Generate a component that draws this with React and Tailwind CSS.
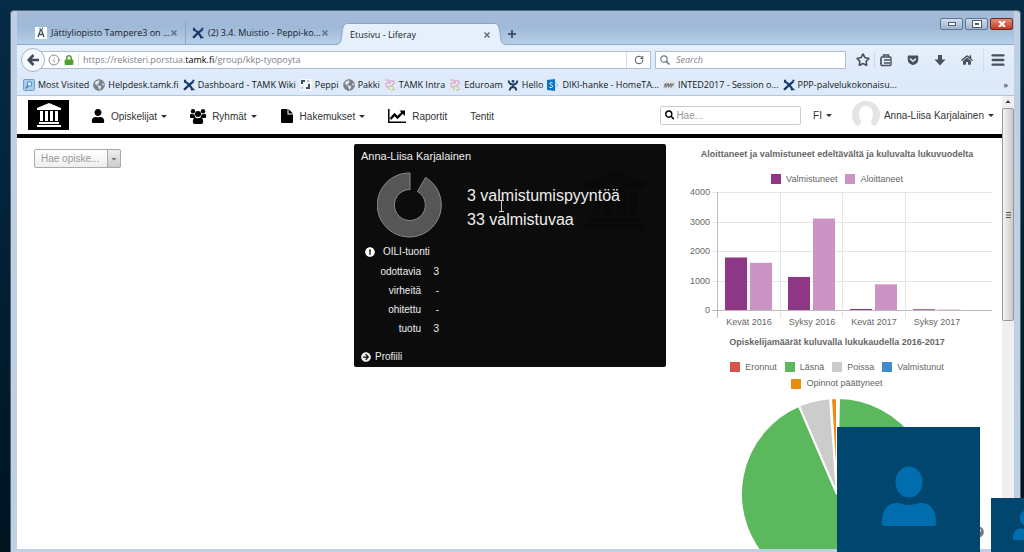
import React from 'react';
import { FaUser, FaSearch, FaCaretDown, FaLock, FaExclamationCircle, FaArrowCircleRight, FaHome, FaGlobeAmericas, FaQuestionCircle, FaGetPocket } from 'react-icons/fa';
import { Info, Menu, RotateCw, Star } from 'lucide-react';

const valilehdet = [
    { nimi: 'Jättiyliopisto Tampere3 on ...', ikoni: 'aamu' },
    { nimi: '(2) 3.4. Muistio - Peppi-ko...', ikoni: 'wiki' },
];

const kirjanmerkit = [
    { nimi: 'Most Visited', ikoni: 'most' },
    { nimi: 'Helpdesk.tamk.fi', ikoni: 'globe' },
    { nimi: 'Dashboard - TAMK Wiki', ikoni: 'wiki' },
    { nimi: 'Peppi', ikoni: 'peppi' },
    { nimi: 'Pakki', ikoni: 'globe' },
    { nimi: 'TAMK Intra', ikoni: 'intra' },
    { nimi: 'Eduroam', ikoni: 'intra' },
    { nimi: 'Hello', ikoni: 'hello' },
    { nimi: 'DIKI-hanke - HomeTA...', ikoni: 'share' },
    { nimi: 'INTED2017 - Session o...', ikoni: 'inted' },
    { nimi: 'PPP-palvelukokonaisu...', ikoni: 'wiki' },
];

const tuonti = [
    { nimi: 'odottavia', arvo: '3' },
    { nimi: 'virheitä', arvo: '-' },
    { nimi: 'ohitettu', arvo: '-' },
    { nimi: 'tuotu', arvo: '3' },
];

const lukukaudet = [
    { nimi: 'Kevät 2016', valmistuneet: 1780, aloittaneet: 1600 },
    { nimi: 'Syksy 2016', valmistuneet: 1120, aloittaneet: 3100 },
    { nimi: 'Kevät 2017', valmistuneet: 35, aloittaneet: 870 },
    { nimi: 'Syksy 2017', valmistuneet: 25, aloittaneet: 12 },
];

function Ikoni({ tyyppi }) {
    if (tyyppi === 'globe') return <FaGlobeAmericas className="size-3 shrink-0 text-[#7b8187]" />;
    return (
        <svg viewBox="0 0 12 12" className="size-3 shrink-0" aria-hidden="true">
            {tyyppi === 'wiki' && (
                <g fill="none" stroke="#173a6b" strokeWidth="2.2">
                    <path d="M1 2.5C4 3 8 7 9.500 11" />
                    <path d="M10.500 2.500C8 4 4 8 1 10.800" />
                    <path d="M1 1.500h2M9.500 1.500h2M8 10.500h3.500" strokeWidth="1.500" />
                </g>
            )}
            {tyyppi === 'aamu' && (
                <>
                    <rect width="12" height="12" fill="#fff" />
                    <path d="M3 10 5.500 3h1L9 10M4 7.500h4M4.500 1.500h1M7 1.500h1" fill="none" stroke="#38536c" strokeWidth="1.300" />
                </>
            )}
            {tyyppi === 'most' && (
                <>
                    <rect x=".5" y=".5" width="11" height="11" rx="1" fill="#a9cdea" stroke="#6fa0cc" />
                    <circle cx="6.500" cy="5" r="2.300" fill="#e4f2fc" stroke="#3f7db5" />
                    <path d="M5 7 2.500 9.500" stroke="#3f7db5" strokeWidth="1.500" />
                </>
            )}
            {tyyppi === 'peppi' && (
                <>
                    <rect width="12" height="12" fill="#f5f7fa" />
                    <path d="M1 5V1h4v2H3v2zM6 8h2V5h2v5H6z" fill="#35516b" />
                    <path d="M1 8h2v2H1zM7 1h2v2H7z" fill="#b8c4cf" />
                </>
            )}
            {tyyppi === 'intra' && (
                <g fill="none" strokeWidth="1">
                    <path d="M1 1h4v3H2M2 4v4h3" stroke="#e0a0ae" />
                    <path d="M6 5V2h4v3l-2 1" stroke="#e58cd0" />
                    <path d="M5 11V7h3l2 2v2H7M8 6v2" stroke="#cbbf6a" />
                </g>
            )}
            {tyyppi === 'hello' && (
                <g fill="none" stroke="#1d3d63" strokeWidth="1.800">
                    <circle cx="6" cy="2.300" r="1.400" fill="#1d3d63" stroke="none" />
                    <path d="M1.500 1.500C2 5 4.500 5.500 6 5.500S10 5 10.500 1.500M6 5v3M2.500 11.500C3 8.500 5 8 6 8s3 .5 3.500 3.500" />
                </g>
            )}
            {tyyppi === 'share' && (
                <>
                    <path d="M7 2.500 11 6 7 9.500z" fill="#d8ebf8" stroke="#7fb6dd" strokeWidth=".8" />
                    <path d="M0 1 8 0v12L0 11z" fill="#0b72c4" />
                    <path d="M5.500 4C4 3 2.500 3.500 3 5c.5 1 2.500.8 2.500 2.200S3.500 9 2.300 8" fill="none" stroke="#fff" />
                </>
            )}
            {tyyppi === 'inted' && (
                <>
                    <rect y="2" width="12" height="8" fill="#e3e4e6" />
                    <path d="M1 8.500 3 4v4.500L5.500 4v4.500L8 4v4.500L10.500 4M1 6h10" fill="none" stroke="#77797c" />
                </>
            )}
        </svg>
    );
}

function Pylvastalo({ className }) {
    return (
        <svg viewBox="0 0 26 24" className={className} fill="currentColor" aria-hidden="true">
            <path d="M13 0 25 5v2H1V5zM4 8h3v10H4zM9 8h3v10H9zM14 8h3v10h-3zM19 8h3v10h-3zM3 19h20v2H3zM1 22h24v2H1z" />
        </svg>
    );
}

function Ryhma() {
    return (
        <svg viewBox="0 0 16 15" className="h-[15px] w-4 text-black" fill="currentColor" aria-hidden="true">
            <circle cx="3" cy="2.300" r="2.200" />
            <circle cx="13" cy="2.300" r="2.200" />
            <circle cx="8" cy="5" r="3" />
            <path d="M0 8.500V6.700C0 5.500.5 4.800 1.500 4.800q1.500.9 3 .2C4.500 6.600 5 7.500 5.800 8.300L4 9H1zM16 8.500V6.700C16 5.500 15.500 4.800 14.500 4.800q-1.500.9-3 .2c0 1.600-.5 2.500-1.300 3.300L12 9h3z" />
            <path d="M2.800 13C2.800 10.500 3.600 8.500 5.300 8.500q2.700 1.500 5.400 0c1.700 0 2.500 2 2.500 4.500q0 2-2 2H4.800q-2 0-2-2z" />
        </svg>
    );
}

function Nuoli() {
    return <svg viewBox="0 0 6 3" className="h-[3px] w-1.5" aria-hidden="true"><path d="M0 0h6L3 3z" fill="#333" /></svg>;
}

function Sulje({ nimi }) {
    return (
        <button aria-label={nimi} className="shrink-0">
            <svg viewBox="0 0 6 6" className="size-1.5" fill="none" stroke="#62707f" strokeWidth="1.5"><path d="m.5.5 5 5m0-5-5 5" /></svg>
        </button>
    );
}

function Otsikkorivi() {
    return (
        <div className="flex h-[34px] items-end border-b border-[#8fa9c6] bg-linear-to-b from-[#a3bbd8] via-[#9fb9d8] to-[#b6cfea] text-[#14202c]">
            {valilehdet.map((lehti, i) => (
                <div key={lehti.nimi} className={`flex h-[22px] items-center gap-1 pr-2 ${i === 0 ? 'ml-[18px] w-[151px] border-r border-[#8ba5c2]' : 'w-[150px] pl-1.5'}`}>
                    <Ikoni tyyppi={lehti.ikoni} />
                    <span className="min-w-0 grow whitespace-nowrap">{lehti.nimi}</span>
                    <Sulje nimi="Sulje välilehti" />
                </div>
            ))}
            <div className="-mb-px flex h-[22px]">
                <svg viewBox="0 0 12 22" className="h-[22px] w-3"><path d="M0 22C6 21 5 17 6 10 7 3 8 .5 12 .5V22z" fill="#e6f0fb" /><path d="M0 21.500C6 20 5 17 6 10 7 3 8 .5 12 .5" fill="none" stroke="#8ba5c2" /></svg>
                <div className="flex w-[146px] items-center justify-between border-t border-[#8ba5c2] bg-[#e6f0fb] pr-1 pl-0.5">
                    <span>Etusivu - Liferay</span>
                    <Sulje nimi="Sulje välilehti" />
                </div>
                <svg viewBox="0 0 12 22" className="h-[22px] w-3"><path d="M12 22C6 21 7 17 6 10 5 3 4 .5 0 .5V22z" fill="#e6f0fb" /><path d="M12 21.500C6 20 7 17 6 10 5 3 4 .5 0 .5" fill="none" stroke="#8ba5c2" /></svg>
            </div>
            <button aria-label="Uusi välilehti" className="mb-1.5 ml-0.5">
                <svg viewBox="0 0 8 8" className="size-2" stroke="#2f3d4b" strokeWidth="1.500"><path d="M4 0v8M0 4h8" /></svg>
            </button>
            <div className="mr-px mb-3.5 ml-auto flex gap-0.5">
                <button aria-label="Pienennä" className="flex h-3 w-[23px] items-center justify-center rounded-xs border border-[#5f7692] bg-linear-to-b from-[#cfdceb] to-[#9fb5d0]"><span className="h-1 w-2 border border-[#4d5c6e] bg-white" /></button>
                <button aria-label="Suurenna" className="flex h-3 w-[23px] items-center justify-center rounded-xs border border-[#5f7692] bg-linear-to-b from-[#cfdceb] to-[#9fb5d0]"><span className="h-1.5 w-2 border-2 border-white bg-[#4d5c6e] outline outline-[#4d5c6e]" /></button>
                <button aria-label="Sulje ikkuna" className="flex h-3 w-[23px] items-center justify-center rounded-xs border border-[#6d2a20] bg-linear-to-b from-[#e08d78] to-[#c23a1e]">
                    <svg viewBox="0 0 8 6" className="h-1.5 w-2" stroke="#fff" strokeWidth="2"><path d="m1 0 6 6m0-6L1 6" /></svg>
                </button>
            </div>
        </div>
    );
}

function Osoiterivi() {
    return (
        <div className="flex h-[30px] items-center bg-linear-to-b from-[#e6f0fb] to-[#deeafa] pr-2 pl-1 text-[#46515d]">
            <button aria-label="Takaisin" className="z-10 flex size-6 shrink-0 items-center justify-center rounded-full border border-[#a3b2c4] bg-[#f5f9fd]">
                <svg viewBox="0 0 12 12" className="size-3" fill="none" stroke="#414b56" strokeWidth="2.600"><path d="M6.500 1 1.800 6l4.700 5M2 6h10" /></svg>
            </button>
            <div className="-ml-1 flex h-[18px] grow items-center border border-[#aebfd2] bg-white pl-1.5">
                <Info className="size-3 text-[#7a7f85]" strokeWidth={1.8} />
                <FaLock className="ml-1 size-2.5 text-[#4fa02c]" />
                <div className="ml-1 h-3 border-l border-[#d9dee4]" />
                <div className="ml-1 grow text-[#7d848b]">https://rekisteri.porstua.<span className="text-black">tamk.fi</span>/group/kkp-tyopoyta</div>
                <button aria-label="Lataa uudelleen" className="flex h-full w-6 items-center justify-center border-l border-[#d3dce6]"><RotateCw className="size-2.5" strokeWidth={2.4} /></button>
            </div>
            <label className="ml-1 flex h-[18px] w-[191px] items-center gap-1.5 border border-[#aebfd2] bg-white pl-1">
                <svg viewBox="0 0 10 10" className="size-2.5" fill="none" stroke="#7a838c"><circle cx="4" cy="4" r="3.200" strokeWidth="1.300" /><path d="m6.300 6.300 3.200 3.200" strokeWidth="1.800" /></svg>
                <input aria-label="Search" placeholder="Search" className="min-w-0 grow italic outline-none placeholder:text-[#7d848b]" />
            </label>
            <button aria-label="Kirjanmerkki" className="ml-2.5"><Star className="size-3.5" strokeWidth={2.8} /></button>
            <div className="ml-1 h-4 border-l border-[#ccd9e8]" />
            <button aria-label="Kirjanmerkit" className="ml-1">
                <svg viewBox="0 0 14 14" className="size-3.5" fill="none" stroke="currentColor" strokeWidth="1.400"><rect x="2" y="4" width="10" height="8.500" rx="1" /><path d="M4.500 4V2h5v2M1 7h2M1 10h2M5 7h6M5 10h6" /></svg>
            </button>
            <button aria-label="Pocket" className="ml-3.5"><FaGetPocket className="size-3" /></button>
            <button aria-label="Lataukset" className="ml-3.5">
                <svg viewBox="0 0 14 14" className="size-3.5" fill="currentColor"><path d="M5 2h4v4.500h3.500L7 12.500 1.500 6.500H5z" /></svg>
            </button>
            <button aria-label="Koti" className="ml-3.5"><FaHome className="size-3" /></button>
            <div className="ml-2.5 h-6 border-l border-[#d3dfec]" />
            <button aria-label="Valikko" className="ml-1.5"><Menu className="size-4" strokeWidth={3.5} /></button>
        </div>
    );
}

function Kirjanmerkkirivi() {
    return (
        <div className="flex h-[21px] items-center gap-1 border-b border-[#b4c6da] bg-[#deeafa] pr-1.5 pl-1.5 text-[#101820]">
            {kirjanmerkit.map(merkki => (
                <a key={merkki.nimi} href="#" className="flex items-center gap-[3px] whitespace-nowrap"><Ikoni tyyppi={merkki.ikoni} />{merkki.nimi}</a>
            ))}
            <button className="ml-auto" aria-label="Lisää kirjanmerkkejä">»</button>
        </div>
    );
}

function Navigaatio() {
    return (
        <header className="flex h-[42px] items-center border-b-4 border-black bg-white pr-2 pl-[11px] text-[10px] text-[#333]">
            <a href="#" aria-label="Etusivu" className="flex h-[30px] w-[41px] items-center justify-center bg-black text-white"><Pylvastalo className="h-6 w-[26px]" /></a>
            <nav className="ml-[22px] flex items-center gap-[23px] pt-0.5">
                <a href="#" className="flex items-center gap-1"><FaUser className="mr-0.5 size-3.5 text-black" />Opiskelijat<Nuoli /></a>
                <a href="#" className="flex items-center gap-1"><span className="mr-0.5"><Ryhma /></span>Ryhmät<Nuoli /></a>
                <a href="#" className="flex items-center gap-1"><FaFile className="mr-0.5 size-3.5 text-black" />Hakemukset<Nuoli /></a>
                <a href="#" className="flex items-center gap-1">
                    <svg viewBox="0 0 18 14" className="mr-0.5 h-3.5 w-[18px]" fill="none" stroke="#000"><path d="M.8 0v13.200H18" strokeWidth="1.500" /><path d="m2.500 10 4-4.500 3 3L14.500 3.500" strokeWidth="2.400" /><path d="M11.500 1.500H17V7z" fill="#000" stroke="none" /></svg>
                    Raportit
                </a>
                <a href="#">Tentit</a>
            </nav>
            <label className="ml-auto flex h-[19px] w-[141px] items-center gap-0.5 rounded-xs border border-[#ccc] pl-1">
                <FaSearch className="size-2.5 text-black" />
                <input aria-label="Hae" placeholder="Hae..." className="min-w-0 grow outline-none placeholder:text-[#999]" />
            </label>
            <button className="ml-3 flex items-center gap-1">FI<Nuoli /></button>
            <button className="ml-5 flex items-center gap-1">
                <svg viewBox="0 0 28 28" className="size-7"><circle cx="14" cy="14" r="14" fill="#e4e4e4" /><path d="M14 5c4 0 7 3 7 8 0 4-2 6-2 8 0 3 3 3 5 5a14 14 0 0 1-20 0c2-2 5-2 5-5 0-2-2-4-2-8 0-5 3-8 7-8z" fill="#fff" /></svg>
                Anna-Liisa Karjalainen<Nuoli />
            </button>
        </header>
    );
}

function FaFile({ className }) {
    return (
        <svg viewBox="0 0 14 14" className={className} fill="currentColor" aria-hidden="true">
            <path d="M1 1Q1 0 2 0H7.500V5.500H13V13Q13 14 12 14H2Q1 14 1 13zM8.500 0 13 4.500H8.500z" />
        </svg>
    );
}

function Profiilikortti() {
    return (
        <section className="mr-2 flex h-[223px] flex-col rounded-xs bg-[#0c0c0c] px-[7px] text-[10px] text-[#eee]">
            <h2 className="pt-1 text-[11px] leading-4">Anna-Liisa Karjalainen</h2>
            <div className="relative flex pt-2 pl-4">
                <svg viewBox="0 0 66 66" className="size-[66px]" aria-hidden="true">
                    <path d="M48.500 5.400A32 32 0 1 1 33 1V17.500A15.500 15.500 0 1 0 40.500 19.500z" fill="#565656" stroke="#8a8a8a" strokeWidth="1" />
                </svg>
                <Pylvastalo className="absolute top-1 right-3 size-16 text-[#090909]" />
                <div className="relative ml-6 pt-3 text-base leading-6">
                    <p>3 valmistumispyyntöä</p>
                    <p>33 valmistuvaa</p>
                    {/* tekstikursori */}
                    <svg viewBox="0 0 5 12" className="absolute top-7 left-8 h-3 w-[5px]" fill="none" stroke="#ccc"><path d="M0 .5h5M2.500 0v12M0 11.500h5" /></svg>
                </div>
            </div>
            <div className="flex items-center gap-2 pt-1 pl-1 leading-5"><FaExclamationCircle className="size-2.5 text-white" />OILI-tuonti</div>
            <table className="w-[78px] leading-[19px]">
                <tbody>
                    {tuonti.map(rivi => (
                        <tr key={rivi.nimi}>
                            <th scope="row" className="text-right font-normal">{rivi.nimi}</th>
                            <td className="w-[18px] text-right">{rivi.arvo}</td>
                        </tr>
                    ))}
                </tbody>
            </table>
            <a href="#" className="mt-auto flex items-center gap-1 pb-0.5 leading-4"><FaArrowCircleRight className="size-2.5" />Profiili</a>
        </section>
    );
}

function Selite({ vari, nimi }) {
    return <span className="flex items-center gap-[5px]"><span className={`h-2.5 w-2.5 ${vari}`} />{nimi}</span>;
}

function Pylvaskaavio() {
    const korkeus = arvo => arvo * 118 / 4000;
    return (
        <svg viewBox="0 0 314 144" className="w-full" fontSize="9" fill="#666">
            {[0, 1000, 2000, 3000, 4000].map(arvo => (
                <g key={arvo}>
                    <path d={`M32 ${Math.round(124 - korkeus(arvo)) + 0.5}H312`} stroke={arvo === 0 ? '#bbb' : '#e5e5e5'} />
                    <text x="30" y={127 - korkeus(arvo)} textAnchor="end">{arvo}</text>
                </g>
            ))}
            {lukukaudet.map((kausi, i) => {
                const x = 37 + Math.round(i * 62.6);
                return (
                    <g key={kausi.nimi}>
                        <path d={`M${x + 0.5} 6V132`} stroke={i === 0 ? '#bbb' : '#e5e5e5'} />
                        <rect x={x + 8} y={124 - korkeus(kausi.valmistuneet)} width="22" height={korkeus(kausi.valmistuneet)} fill="#8e3786" />
                        <rect x={x + 33} y={124 - korkeus(kausi.aloittaneet)} width="22" height={korkeus(kausi.aloittaneet)} fill="#cc93c5" />
                        <text x={x + 32} y="139" textAnchor="middle">{kausi.nimi}</text>
                    </g>
                );
            })}
        </svg>
    );
}

function Kaaviot() {
    return (
        <section className="pl-1.5 text-[9px] text-[#666]">
            <h3 className="pt-1 text-center font-bold whitespace-nowrap">Aloittaneet ja valmistuneet edeltävältä ja kuluvalta lukuvuodelta</h3>
            <div className="flex justify-center gap-2 pt-[11px]">
                <Selite vari="bg-[#8e3786]" nimi="Valmistuneet" />
                <Selite vari="bg-[#cc93c5]" nimi="Aloittaneet" />
            </div>
            <Pylvaskaavio />
            <h3 className="pt-1.5 text-center font-bold whitespace-nowrap">Opiskelijamäärät kuluvalla lukukaudella 2016-2017</h3>
            <div className="flex flex-wrap justify-center gap-x-2 gap-y-[3px] px-8 pt-[11px]">
                <Selite vari="bg-[#d9534f]" nimi="Eronnut" />
                <Selite vari="bg-[#5cb85c]" nimi="Läsnä" />
                <Selite vari="bg-[#ccc]" nimi="Poissa" />
                <Selite vari="bg-[#428bca]" nimi="Valmistunut" />
                <Selite vari="bg-[#ec8b12]" nimi="Opinnot päättyneet" />
            </div>
            <svg viewBox="0 0 194 194" className="mx-auto mt-1.5 w-[194px]" stroke="#fff" strokeWidth="2">
                <path d="M97 97 99 1A96 96 0 1 1 59 8.800z" fill="#5cb85c" />
                <path d="M97 97 59 8.800A96 96 0 0 1 90 1.300z" fill="#ccc" />
                <path d="M97 97 91 1.200A96 96 0 0 1 97 1z" fill="#ec8b12" />
            </svg>
        </section>
    );
}

function Vierityspalkki() {
    return (
        <div className="flex w-3 shrink-0 flex-col items-center bg-[#efeff1]" aria-hidden="true">
            <svg viewBox="0 0 12 12" className="size-3"><path d="m6 4 2.500 3h-5z" fill="#444" /></svg>
            <div className="flex h-[213px] w-3 items-center justify-center rounded-xs border border-[#999] bg-linear-to-r from-[#f4f4f4] to-[#c9c9cd]">
                <svg viewBox="0 0 5 6" className="h-1.5 w-[5px]" stroke="#555"><path d="M0 .5h5M0 3h5M0 5.500h5" /></svg>
            </div>
        </div>
    );
}

function Osallistuja({ className, kuva }) {
    return (
        <div className={`absolute bottom-0 flex justify-center bg-[#00466e] text-[#006eae] ${className}`}>
            <svg viewBox="0 0 54 60" className={kuva} fill="currentColor" aria-hidden="true">
                <ellipse cx="27" cy="16" rx="13.500" ry="15.500" />
                <path d="M0 58V55C0 44 6 37 15 37c4 0 7 2 12 2s8-2 12-2c9 0 15 7 15 18v3q0 2-2 2H2q-2 0-2-2z" />
            </svg>
        </div>
    );
}

function App() {
    return (
        <div className="relative flex h-screen overflow-hidden bg-linear-to-b from-[#052c48] to-[#001421] pt-2.5 pr-[3px] pl-2.5 font-['Liberation_Sans',Arial,sans-serif]">
            <div className="flex min-w-0 grow flex-col rounded-t-sm border border-b-0 border-[#5b6672] bg-[#bdd0e4] px-[6px] pb-[3px]">
                <div className="font-['Open_Sans','Noto_Sans',sans-serif] text-[9px]">
                    <Otsikkorivi />
                    <Osoiterivi />
                    <Kirjanmerkkirivi />
                </div>
                <div className="flex min-h-0 grow overflow-hidden bg-white">
                    <div className="min-w-0 grow">
                        <Navigaatio />
                        <main className="grid grid-cols-3 items-start pt-1.5 pr-2 pl-[17px]">
                            <div className="relative mt-[5px] flex h-[19px] w-[87px] text-[10px] text-[#999]">
                                <select aria-label="Hae opiskelija" className="w-full appearance-none rounded-xs border border-[#aaa] bg-linear-to-b from-white to-[#eee] pl-1.5">
                                    <option>Hae opiske...</option>
                                </select>
                                <span className="pointer-events-none absolute inset-y-0 right-0 flex w-3.5 items-center justify-center rounded-r-xs border border-[#aaa] bg-linear-to-b from-[#eee] to-[#ccc]"><FaCaretDown className="size-2 text-[#777]" /></span>
                            </div>
                            <Profiilikortti />
                            <Kaaviot />
                        </main>
                    </div>
                    <Vierityspalkki />
                </div>
            </div>
            <FaQuestionCircle className="absolute right-10 bottom-3.5 size-3 text-[#777]" />
            <Osallistuja className="right-11 h-[125px] w-[143px] items-center pt-[13px]" kuva="h-[60px] w-[54px]" />
            <Osallistuja className="-right-[38px] h-[54px] w-[71px] items-center" kuva="h-[30px] w-[27px]" />
        </div>
    );
}

export default App;
